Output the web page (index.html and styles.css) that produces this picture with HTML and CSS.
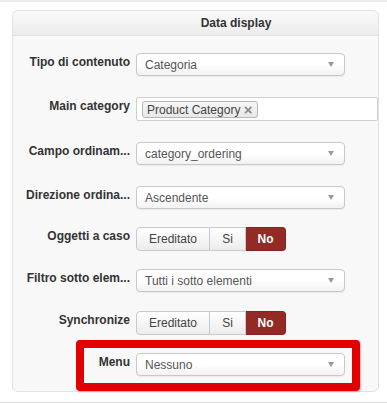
FILE: index.html
```html
<!DOCTYPE html>
<html lang="it">
<head>
    <meta charset="UTF-8">
    <meta name="viewport" content="width=device-width, initial-scale=1.0">
    <title>Data display</title>
    <link rel="stylesheet" href="styles.css">
</head>
<body>
    <div class="page">
        <div class="panel">
            <div class="panel-header">Data display</div>

            <div class="panel-body">
                <div class="row">
                    <label class="row-label">Tipo di contenuto</label>
                    <div class="select"><span>Categoria</span><i class="caret"></i></div>
                </div>

                <div class="row">
                    <label class="row-label">Main category</label>
                    <div class="tag-input">
                        <span class="tag">Product Category <b class="tag-close">×</b></span>
                    </div>
                </div>

                <div class="row">
                    <label class="row-label">Campo ordinam...</label>
                    <div class="select"><span>category_ordering</span><i class="caret"></i></div>
                </div>

                <div class="row row-short">
                    <label class="row-label">Direzione ordina...</label>
                    <div class="select"><span>Ascendente</span><i class="caret"></i></div>
                </div>

                <div class="row row-short">
                    <label class="row-label">Oggetti a caso</label>
                    <div class="btn-group">
                        <button class="btn">Ereditato</button>
                        <button class="btn btn-si">Si</button>
                        <button class="btn active">No</button>
                    </div>
                </div>

                <div class="row row-short row-mid">
                    <label class="row-label">Filtro sotto elem...</label>
                    <div class="select"><span>Tutti i sotto elementi</span><i class="caret"></i></div>
                </div>

                <div class="row row-short">
                    <label class="row-label">Synchronize</label>
                    <div class="btn-group">
                        <button class="btn">Ereditato</button>
                        <button class="btn btn-si">Si</button>
                        <button class="btn active">No</button>
                    </div>
                </div>

                <div class="row row-last">
                    <label class="row-label">Menu</label>
                    <div class="select"><span>Nessuno</span><i class="caret"></i></div>
                </div>
            </div>

            <div class="highlight"></div>
        </div>
    </div>
</body>
</html>
```

FILE: styles.css
```css
* {
    margin: 0;
    padding: 0;
    box-sizing: border-box;
}

body {
    font-family: "Liberation Sans", Arial, sans-serif;
    font-size: 12px;
    color: #333;
    background: white;
}

.page {
    height: 403px;
    border-top: 2px solid #ececec;
    border-bottom: 1px solid #dcdcdc;
    padding: 8px 0 0 12px;
}

.panel {
    position: relative;
    width: 367px;
    background: #f8f8f8;
    border: 1px solid #e2e2e2;
    border-radius: 6px;
}

.panel-header {
    height: 25px;
    line-height: 25px;
    padding-left: 81px;
    text-align: center;
    font-weight: bold;
    color: #333;
    background: linear-gradient(#fafafa, #ececec);
    border-bottom: 1px solid #e0e0e0;
    border-radius: 6px 6px 0 0;
}

.panel-body {
    padding: 17px 0 15px;
}

.row {
    display: flex;
    align-items: flex-start;
    margin-bottom: 21px;
}

.row-short {
    margin-bottom: 18px;
}

.row-mid {
    margin-bottom: 19px;
}

.row-last {
    margin-bottom: 0;
}

.row-label {
    width: 117px;
    flex-shrink: 0;
    text-align: right;
    font-weight: bold;
    line-height: 16px;
    padding-top: 1px;
    white-space: nowrap;
    color: #333;
}

.select {
    margin-left: 6px;
    width: 209px;
    height: 23px;
    display: flex;
    align-items: center;
    justify-content: space-between;
    padding: 0 10px 0 8px;
    background: linear-gradient(#ffffff 50%, #f2f2f2);
    border: 1px solid #c8c8c8;
    border-radius: 4px;
    box-shadow: 0 1px 1px rgba(0,0,0,0.06);
    color: #555;
}

.caret {
    width: 0;
    height: 0;
    border-left: 3px solid transparent;
    border-right: 3px solid transparent;
    border-top: 5px solid #999;
}

.tag-input {
    margin-left: 6px;
    width: 243px;
    height: 24px;
    padding: 3px 5px;
    background: white;
    border: 1px solid #cfcfcf;
    border-radius: 2px;
}

.tag {
    display: inline-block;
    height: 17px;
    line-height: 15px;
    padding: 0 5px 0 4px;
    font-size: 12px;
    color: #444;
    background: linear-gradient(#f6f6f6, #e8e8e8);
    border: 1px solid #b5b5b5;
    border-radius: 3px;
}

.tag-close {
    font-weight: bold;
    color: #8a8a8a;
    font-size: 15px;
    vertical-align: -1px;
}

.btn-group {
    margin-left: 6px;
    display: flex;
}

.btn {
    height: 24px;
    padding: 0 10px;
    font-family: inherit;
    font-size: 12px;
    color: #444;
    background: linear-gradient(#ffffff, #ececec);
    border: 1px solid #c9c9c9;
    border-left: none;
}

.btn:first-child {
    width: 74px;
    border-left: 1px solid #c9c9c9;
    border-radius: 4px 0 0 4px;
}

.btn-si {
    width: 36px;
}

.btn.active {
    width: 40px;
    color: white;
    font-weight: bold;
    background: #942a25;
    border-color: #842420;
    border-radius: 0 4px 4px 0;
}

.highlight {
    position: absolute;
    left: 63px;
    top: 329px;
    width: 284px;
    height: 51px;
    border: 8px solid #e20000;
    border-radius: 4px;
    box-shadow: 1px 1px 2px rgba(0,0,0,0.25);
}
```
